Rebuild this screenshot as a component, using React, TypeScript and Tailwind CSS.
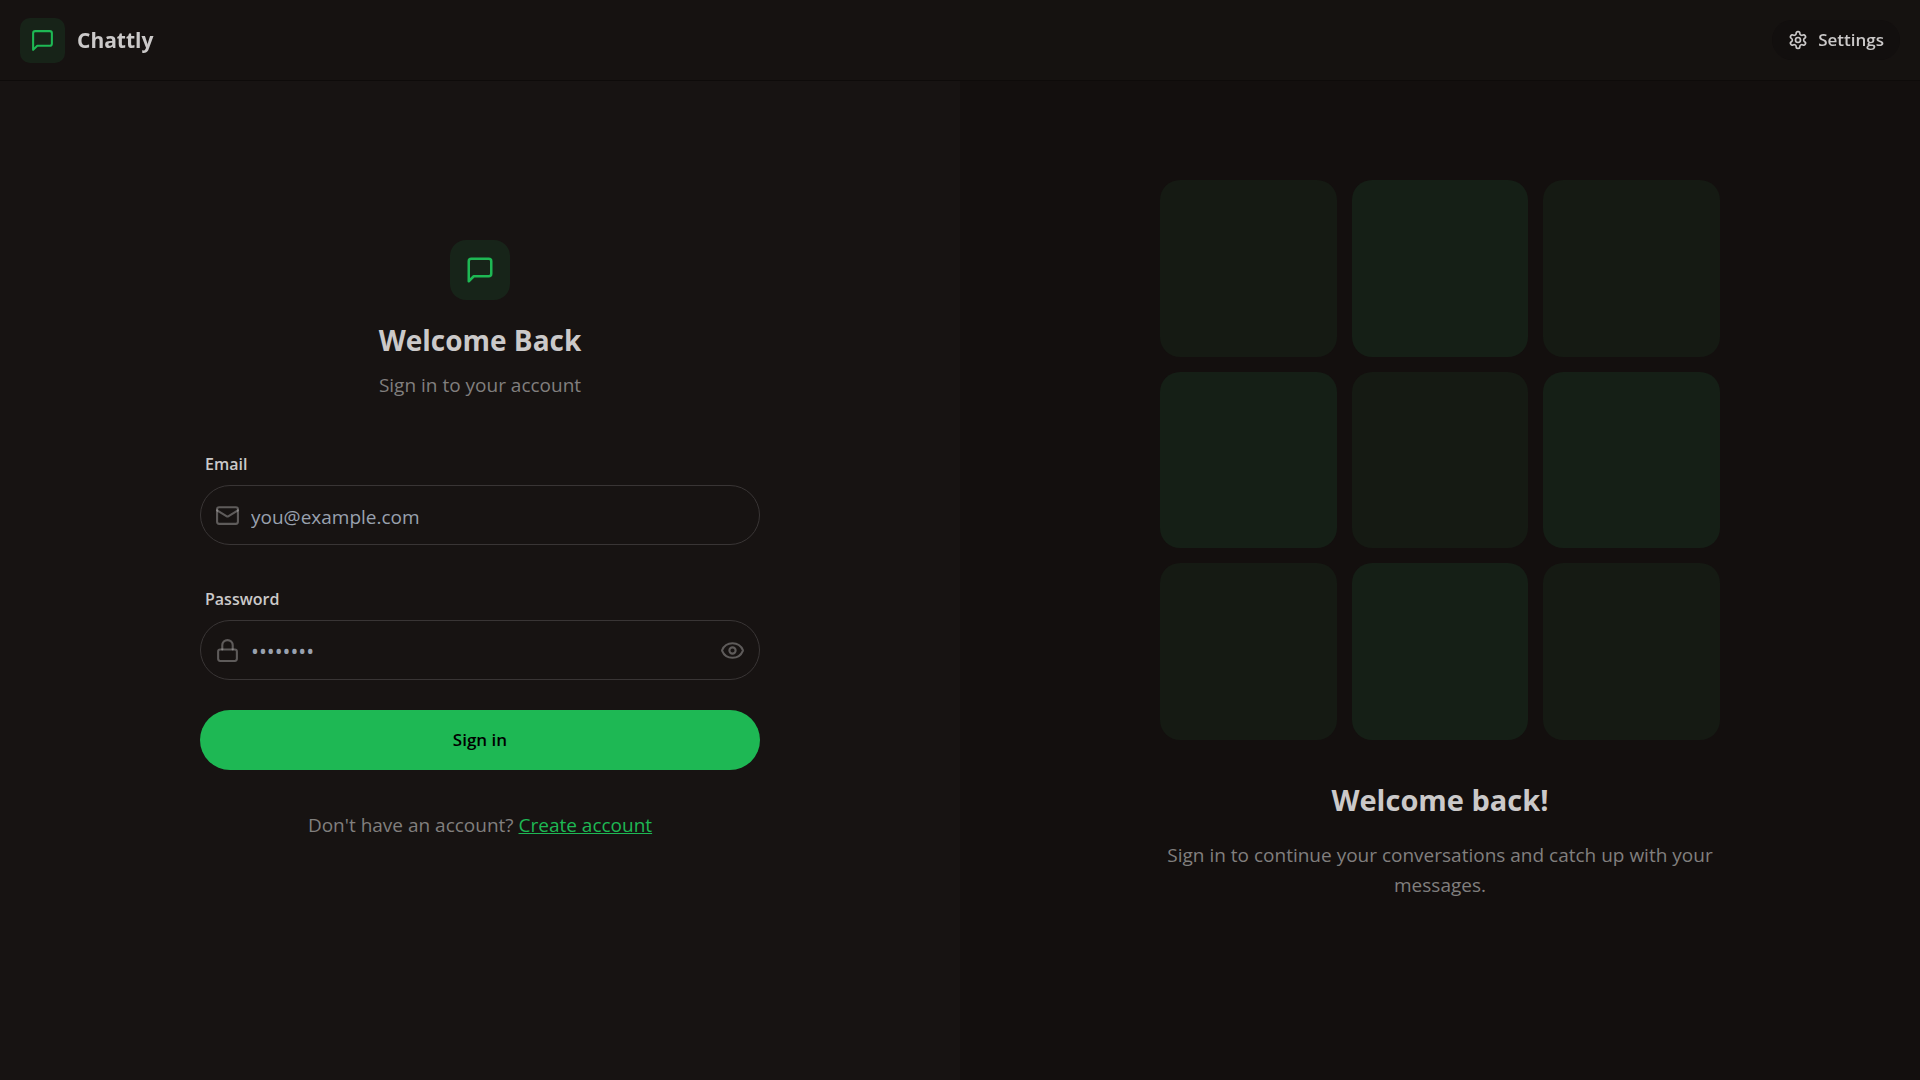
import { useState } from "react";
import type { ReactNode } from "react";
import { Eye, Lock } from "lucide-react";

const tiles = Array.from({ length: 9 }, (_, i) => i);

function Icon({ className, children }: { className: string; children: ReactNode }) {
  return (
    <svg
      viewBox="0 0 24 24"
      fill="none"
      stroke="currentColor"
      strokeWidth={2}
      strokeLinecap="round"
      strokeLinejoin="round"
      aria-hidden="true"
      className={className}
    >
      {children}
    </svg>
  );
}

function MessageIcon({ className }: { className: string }) {
  return (
    <Icon className={className}>
      <path d="M21 15a2 2 0 0 1-2 2H7l-4 4V5a2 2 0 0 1 2-2h14a2 2 0 0 1 2 2z" />
    </Icon>
  );
}

function MailIcon({ className }: { className: string }) {
  return (
    <Icon className={className}>
      <rect width="20" height="16" x="2" y="4" rx="2" />
      <path d="m22 7-8.97 5.7a1.94 1.94 0 0 1-2.06 0L2 7" />
    </Icon>
  );
}

function GearIcon({ className }: { className: string }) {
  return (
    <Icon className={className}>
      <path d="M12.22 2h-.44a2 2 0 0 0-2 2v.18a2 2 0 0 1-1 1.73l-.43.25a2 2 0 0 1-2 0l-.15-.08a2 2 0 0 0-2.73.73l-.22.38a2 2 0 0 0 .73 2.73l.15.1a2 2 0 0 1 1 1.72v.51a2 2 0 0 1-1 1.74l-.15.09a2 2 0 0 0-.73 2.73l.22.38a2 2 0 0 0 2.73.73l.15-.08a2 2 0 0 1 2 0l.43.25a2 2 0 0 1 1 1.73V20a2 2 0 0 0 2 2h.44a2 2 0 0 0 2-2v-.18a2 2 0 0 1 1-1.73l.43-.25a2 2 0 0 1 2 0l.15.08a2 2 0 0 0 2.73-.73l.22-.39a2 2 0 0 0-.73-2.73l-.15-.08a2 2 0 0 1-1-1.74v-.5a2 2 0 0 1 1-1.74l.15-.09a2 2 0 0 0 .73-2.73l-.22-.38a2 2 0 0 0-2.73-.73l-.15.08a2 2 0 0 1-2 0l-.43-.25a2 2 0 0 1-1-1.73V4a2 2 0 0 0-2-2z" />
      <circle cx="12" cy="12" r="3" />
    </Icon>
  );
}

export default function App() {
  const [visible, setVisible] = useState(false);
  return (
    <div className="min-h-screen bg-[#171312] font-['Open_Sans','Noto_Sans',sans-serif] text-[#cbc9c9]">
      <header className="fixed inset-x-0 top-0 z-10 border-b border-[#0e0b0a] bg-[#171312]/80">
        <div className="flex h-20 items-center justify-between px-5">
          <a href="#" className="flex items-center gap-3">
            <span className="flex size-[45px] items-center justify-center rounded-[10px] bg-[#1eb854]/10">
              <MessageIcon className="size-[25px] text-[#1eb854]" />
            </span>
            <span className="text-[21px] leading-7 font-bold">Chattly</span>
          </a>
          <button className="flex h-10 items-center gap-2.5 rounded-full bg-[#120f0e] px-4 text-[17px] font-semibold">
            <GearIcon className="size-5" />
            Settings
          </button>
        </div>
      </header>

      <main className="grid min-h-screen grid-cols-2">
        <section className="flex flex-col items-center justify-center">
          <div className="w-full max-w-[560px]">
            <div className="mb-10 flex flex-col items-center text-center">
              <div className="flex size-[60px] items-center justify-center rounded-2xl bg-[#1eb854]/10">
                <MessageIcon className="size-[30px] text-[#1eb854]" />
              </div>
              <h1 className="mt-5 text-[28px] leading-10 font-bold">Welcome Back</h1>
              <p className="mt-2.5 text-[19px] leading-[30px] text-[#817f7e]">Sign in to your account</p>
            </div>

            <form className="flex flex-col gap-[30px]" onSubmit={(e) => e.preventDefault()}>
              <div>
                <label htmlFor="email" className="block px-[5px] pt-3 pb-[9px] text-[16px] leading-6 font-semibold">
                  Email
                </label>
                <div className="flex h-[60px] items-center gap-[11px] rounded-full border border-[#393535] px-[14px]">
                  <MailIcon className="size-[25px] text-[#cbc9c9]/40" />
                  <input
                    id="email"
                    type="email"
                    placeholder="you@example.com"
                    className="min-w-0 flex-1 bg-transparent pt-1 text-[19px] outline-none placeholder:text-[#99a1af]"
                  />
                </div>
              </div>

              <div>
                <label htmlFor="password" className="block px-[5px] pt-3 pb-[9px] text-[16px] leading-6 font-semibold">
                  Password
                </label>
                <div className="flex h-[60px] items-center gap-[11px] rounded-full border border-[#393535] px-[14px]">
                  <Lock className="size-[25px] text-[#cbc9c9]/40" />
                  <input
                    id="password"
                    type={visible ? "text" : "password"}
                    placeholder="••••••••"
                    className="min-w-0 flex-1 bg-transparent pt-1 text-[21px] outline-none placeholder:text-[#99a1af]"
                  />
                  <button type="button" aria-label="Show password" onClick={() => setVisible(!visible)}>
                    <Eye className="size-[25px] text-[#cbc9c9]/40" />
                  </button>
                </div>
              </div>

              <button type="submit" className="h-[60px] rounded-full bg-[#1eb854] text-[17px] font-semibold text-black">
                Sign in
              </button>
            </form>

            <p className="mt-10 text-center text-[19px] leading-[30px] text-[#817f7e]">
              Don't have an account?{" "}
              <a href="#" className="text-[#1eb854] underline">
                Create account
              </a>
            </p>
          </div>
        </section>

        <section className="flex flex-col items-center justify-center bg-[#130f0e]">
          <div className="w-full max-w-[560px] text-center">
            <div className="mb-10 grid grid-cols-3 gap-[15px]">
              {tiles.map((i) => (
                <div
                  key={i}
                  className={"aspect-square rounded-[20px] " + (i % 2 === 0 ? "bg-[#151a13]" : "bg-[#151f16]")}
                />
              ))}
            </div>
            <h2 className="mb-5 text-[29px] leading-10 font-bold">Welcome back!</h2>
            <p className="text-[19px] leading-[30px] text-[#817f7e]">
              Sign in to continue your conversations and catch up with your messages.
            </p>
          </div>
        </section>
      </main>
    </div>
  );
}
